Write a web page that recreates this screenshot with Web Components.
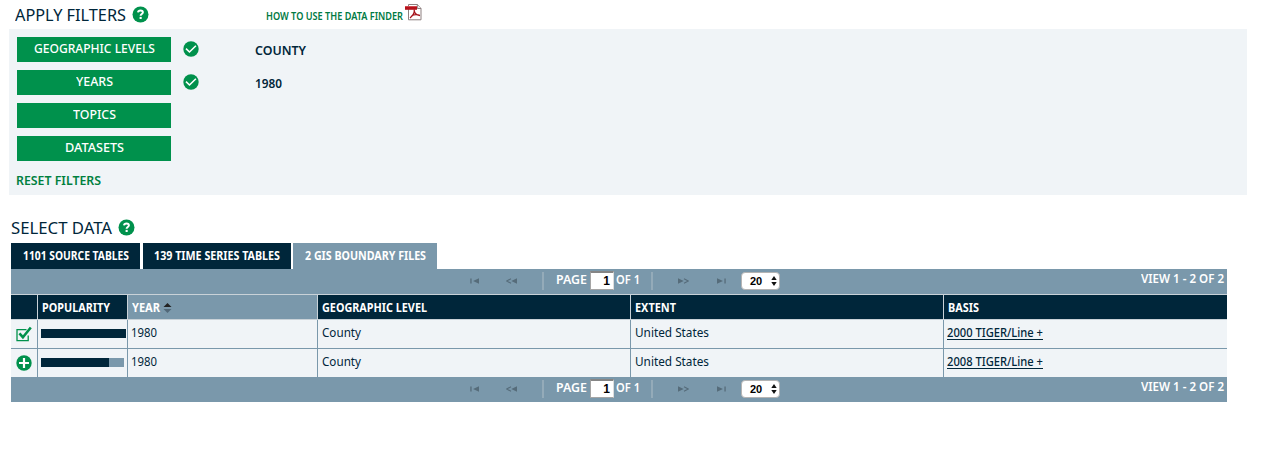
<!DOCTYPE html>
<html lang="en"><head><meta charset="utf-8"><title>Data Finder</title>
<style>body{margin:0;background:#fff;color:#00263a;font-family:"Noto Sans","Open Sans",sans-serif;overflow:hidden}</style></head>
<body><data-finder></data-finder>
<script>
const define=(name,html,setup)=>customElements.define(name,class extends HTMLElement{
  constructor(){super();this.attachShadow({mode:'open'}).innerHTML=typeof html==='function'?html(this):html;}
  connectedCallback(){if(setup)setup(this);}
});

/* Label whose glyphs are condensed to a given advance width. */
define('fit-text','<style>:host{display:block;flex:none;height:20px;line-height:20px;font-size:13px;white-space:nowrap}span{display:inline-block;transform-origin:0 0;height:20px}:host([underline]) span{text-decoration:underline;text-decoration-thickness:1px;text-underline-offset:2px;text-decoration-skip-ink:none}</style><span><slot></slot></span>',el=>{
  const w=+el.getAttribute('w'),s=el.shadowRoot.querySelector('span');
  el.style.width=w+'px';
  s.style.transform='scaleX('+w/s.getBoundingClientRect().width+')';
});

const icons={
 help:'<svg width="17" height="17" viewBox="0 0 17 17"><circle cx="8.5" cy="8.5" r="8" fill="#00914c"/><path d="M6 6.4C6.2 5 7.2 4.4 8.5 4.4c1.5 0 2.4.7 2.4 1.9 0 1.7-2.3 1.7-2.3 3.5" fill="none" stroke="#fff" stroke-width="2"/><rect x="7.6" y="10.9" width="2.1" height="2.1" fill="#fff"/></svg>',
 check:'<svg width="16" height="16" viewBox="0 0 16 16"><circle cx="8" cy="8" r="7.7" fill="#00914c"/><path d="M3 7.6l3.5 3.4 6.4-6.2" fill="none" stroke="#fff" stroke-width="1.6"/></svg>',
 plus:'<svg width="16" height="16" viewBox="0 0 16 16"><circle cx="8" cy="8" r="7.7" fill="#00914c"/><path d="M8 3v10M3 8h10" stroke="#fff" stroke-width="2.2"/></svg>',
 box:'<svg width="16" height="16" viewBox="0 0 16 16"><path d="M10.5 3.7H1v11h11.2V9.5" fill="none" stroke="#00914c" stroke-width="1.3"/><path d="M3.4 7.4l3.5 3.8L14.8 1.5" fill="none" stroke="#00914c" stroke-width="2.6"/></svg>',
 pdf:'<svg width="17" height="17" viewBox="0 0 17 17"><path d="M3.5.5h9l3.5 4v11.3H3.5z" fill="#fff" stroke="#8e8080"/><path d="M12.3.5v4H16" fill="#eee" stroke="#8e8080"/><path d="M0 2h12v3.8H0z" fill="#b5121b"/><path d="M0 2h12v1H0z" fill="#d24a50"/><path d="M9.3 5.5c.3 3-.7 5.6-4.3 8.4M9.2 6.5c.4 2.8 2.3 4.5 5.8 5.2M6.6 11.8c2.1-1.2 4.8-1.5 8-.6" fill="none" stroke="#a5121b" stroke-width="1.3"/></svg>',
 sort:'<svg width="9" height="10" viewBox="0 0 9 10"><path d="M.5 4L4.5 0l4 4z" fill="#222"/><path d="M.5 6h8l-4 4z" fill="#526878"/></svg>',
 first:'<svg width="9" height="6" viewBox="0 0 9 6"><path d="M.3.5h1.3v5H.3zM9 .3v5.4L3 3z" fill="#566c7a"/></svg>',
 prev:'<svg width="11" height="6" viewBox="0 0 11 6"><path d="M5 .7L.8 3 5 5.3" fill="none" stroke="#566c7a" stroke-width="1.1"/><path d="M11 .3v5.4L5.3 3z" fill="#566c7a"/></svg>',
 next:'<svg width="11" height="6" viewBox="0 0 11 6"><path d="M6 .7L10.2 3 6 5.3" fill="none" stroke="#566c7a" stroke-width="1.1"/><path d="M0 .3v5.4L5.7 3z" fill="#566c7a"/></svg>',
 last:'<svg width="9" height="6" viewBox="0 0 9 6"><path d="M7.4.5h1.3v5H7.4zM0 .3v5.4L6 3z" fill="#566c7a"/></svg>',
 updown:'<svg width="6" height="10" viewBox="0 0 6 10"><path d="M.3 4L3 0l2.7 4zM.3 6h5.4L3 10z" fill="#111"/></svg>'
};
define('ui-icon',el=>'<style>:host{display:block;flex:none}svg{display:block}</style>'+icons[el.getAttribute('name')]);

define('filter-row',`<style>:host{display:flex;height:25px}
.b{width:154px;height:25px;background:#00914c;color:#fff;font-weight:500;display:flex;justify-content:center;padding-top:1px;box-sizing:border-box}
ui-icon{margin:4px 0 0 12px}.v{margin:3px 0 0 56px;font-weight:600}</style>
<div class="b"><slot></slot></div><ui-icon name="check"></ui-icon><div class="v"><slot name="value"></slot></div>`,el=>{
  if(!el.querySelector('[slot]'))el.shadowRoot.querySelector('ui-icon').style.display='none';
});

define('filter-panel',`<style>:host{display:block}
.h{display:flex;height:29px}.h fit-text{margin:5px 0 0 15px;font-size:16.3px}.h ui-icon{margin:6px 0 0 6px}
.h .how{color:#007a43;font-size:10.5px;font-weight:600;margin:6px 0 0 117px}.h .pdf{margin:4px 0 0 2px}
.p{background:#f0f4f7;margin-left:9px;width:1238px;height:166px;box-sizing:border-box;padding:8px 0 0 8px;display:flex;flex-direction:column;gap:8px}
.r{color:#00803f;font-weight:600;margin:1px 0 0 -1px}</style>
<div class="h"><fit-text w="111">APPLY FILTERS</fit-text><ui-icon name="help"></ui-icon><fit-text class="how" w="137">HOW TO USE THE DATA FINDER</fit-text><ui-icon class="pdf" name="pdf"></ui-icon></div>
<div class="p"><filter-row><fit-text w="121">GEOGRAPHIC LEVELS</fit-text><fit-text slot="value" w="51">COUNTY</fit-text></filter-row>
<filter-row><fit-text w="37">YEARS</fit-text><fit-text slot="value" w="27">1980</fit-text></filter-row>
<filter-row><fit-text w="43">TOPICS</fit-text></filter-row><filter-row><fit-text w="59">DATASETS</fit-text></filter-row>
<fit-text class="r" w="85">RESET FILTERS</fit-text></div>`);

define('tab-item',`<style>:host{display:flex;justify-content:center;height:26px;background:#00263a;color:#fff;font-weight:700;box-sizing:border-box;padding-top:3px}:host([active]){background:#7a98ab}::slotted(*){font-size:12.3px}</style><slot></slot>`);

define('pager-bar',`<style>:host{display:flex;height:25px;background:#7a98ab;color:#fff;font-weight:600;width:1216px}
ui-icon{margin-top:9px}.s{width:2px;height:18px;background:#94abb9;margin-top:3px}
.n,.q{background:#fff;color:#000;font:700 12px/17px "Liberation Sans",sans-serif;box-sizing:border-box}
.n{width:24px;height:19px;border:1px solid #a5a5a5;border-top:2px solid #858585;border-right-color:#ddd;margin:2px 0 0 3px;text-align:right;padding-right:3px;line-height:16px}
.q{width:39px;height:18px;border:1px solid #b4b4b4;border-radius:4px;margin:3px 0 0 15px;display:flex;font-size:11px;line-height:16px;padding-left:8px}
.q ui-icon{margin:3px 0 0 9px}</style>
<ui-icon name="first" style="margin-left:459px"></ui-icon><ui-icon name="prev" style="margin-left:27px"></ui-icon><div class="s" style="margin-left:25px"></div>
<fit-text w="31" style="margin-left:12px">PAGE</fit-text><div class="n">1</div><fit-text w="24" style="margin-left:2px">OF 1</fit-text><div class="s" style="margin-left:11px"></div>
<ui-icon name="next" style="margin-left:25px"></ui-icon><ui-icon name="last" style="margin-left:28px"></ui-icon><div class="q">20<ui-icon name="updown"></ui-icon></div>
<fit-text w="83" style="margin:-1px 3px 0 auto">VIEW 1 - 2 OF 2</fit-text>`);

const cols='display:grid;grid-template-columns:27px 90px 190px 313px 313px 283px;';
define('table-head',`<style>:host{${cols}height:26px;width:1216px;box-sizing:border-box;border:solid #c9d2d8;border-width:1px 0;background:#00263a;color:#fff;font-weight:700}
div{padding:3px 0 0 4px;display:flex;box-sizing:border-box;border-left:1px solid #c9d2d8;margin-left:-1px}.i{border:0;margin:0}fit-text{font-size:12.3px}.y{background:#7a98ab}ui-icon{margin:5px 0 0 3px}</style>
<div class="i"></div><div><fit-text w="68">POPULARITY</fit-text></div><div class="y"><fit-text w="28">YEAR</fit-text><ui-icon name="sort"></ui-icon></div><div><fit-text w="105">GEOGRAPHIC LEVEL</fit-text></div><div><fit-text w="41">EXTENT</fit-text></div><div><fit-text w="31">BASIS</fit-text></div>`);

define('table-row',el=>`<style>:host{${cols}height:29px;width:1216px;box-sizing:border-box;border-bottom:1px solid #7a98ab;background:#f0f4f7}:host([last]){height:28px;border:0}
div{padding:2px 0 0 4px;box-sizing:border-box;margin-left:-1px;border-left:1px solid #7a98ab;display:flex}
.i{border:0;margin:0;padding:6px 0 0 5px}.b{padding:9px 0 0 3px}.b i{height:9px;background:#00263a}.b i+i{background:#7a98ab}.y{padding-left:3px}
.u{font-weight:500}</style>
<div class="i"><ui-icon name="${el.getAttribute('icon')}"></ui-icon></div><div class="b"><i style="width:${el.getAttribute('fill')}px"></i><i style="width:${el.getAttribute('rest')}px"></i></div>
<div class="y"><fit-text w="26">1980</fit-text></div><div><fit-text w="39">County</fit-text></div><div><fit-text w="74">United States</fit-text></div><div style="padding-left:3px"><fit-text underline class="u" w="96"><slot></slot></fit-text></div>`);

define('data-panel',`<style>:host{display:block;margin-left:11px}.h{display:flex;padding-top:22px;height:26px}.h fit-text{font-size:16.3px;margin-top:1px}.h ui-icon{margin:2px 0 0 6px}.t{display:flex}</style>
<div class="h"><fit-text w="101">SELECT DATA</fit-text><ui-icon name="help"></ui-icon></div>
<div class="t"><tab-item style="width:129px"><fit-text w="106">1101 SOURCE TABLES</fit-text></tab-item><tab-item style="width:148px;margin:0 2px 0 3px"><fit-text w="126">139 TIME SERIES TABLES</fit-text></tab-item><tab-item active style="width:144px"><fit-text w="121">2 GIS BOUNDARY FILES</fit-text></tab-item></div>
<pager-bar></pager-bar><table-head></table-head>
<table-row icon="box" fill="85" rest="0">2000 TIGER/Line +</table-row><table-row last icon="plus" fill="68" rest="15">2008 TIGER/Line +</table-row><pager-bar></pager-bar>`);
define('data-finder','<style>:host{display:block}</style><filter-panel></filter-panel><data-panel></data-panel>');
</script></body></html>
